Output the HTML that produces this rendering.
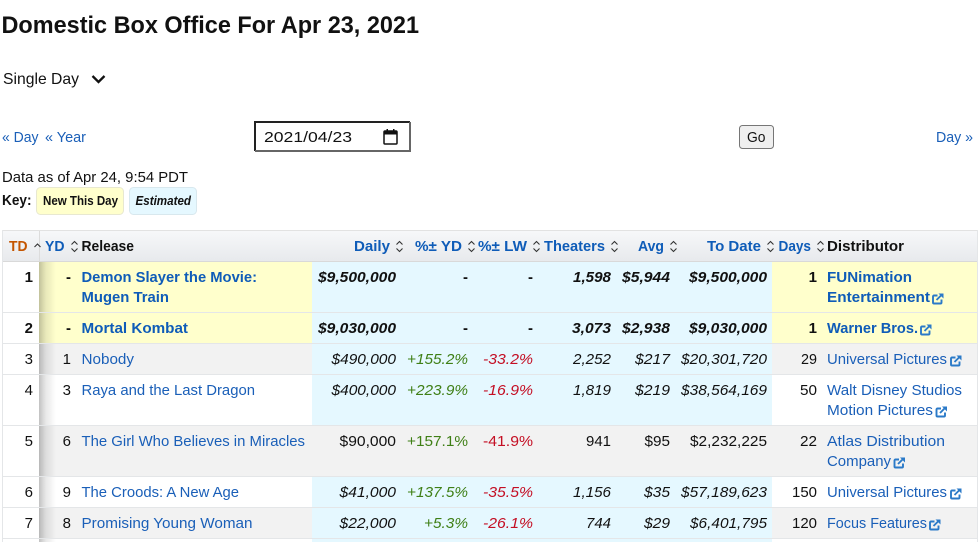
<!DOCTYPE html>
<html lang="en">
<head>
<meta charset="utf-8">
<title>Domestic Box Office For Apr 23, 2021</title>
<style>
html,body{margin:0;padding:0;background:#fff;width:979px;height:542px;overflow:hidden}
svg{display:block;font-family:"Liberation Sans",Arial,sans-serif;font-size:15px;fill:#111}
.a{fill:#1a5fb8}
.e{text-anchor:end}
.b{font-weight:bold}
.i{font-style:italic}
.bl{fill:#0f5cb8;font-weight:bold}
.g{fill:#3f7f16;font-style:italic}
.r{fill:#c40f24;font-style:italic}
.s{fill:none;stroke:#333;stroke-width:1.1}
.x{fill:none;stroke:#2b7ac8;stroke-width:1.900}
</style>
</head>
<body>
<svg width="979" height="542" viewBox="0 0 979 542" xmlns="http://www.w3.org/2000/svg">
<defs>
<linearGradient id="hd" x1="0" y1="0" x2="0" y2="1"><stop offset="0" stop-color="#f7f8fa"/><stop offset="1" stop-color="#e7e9ec"/></linearGradient>
<linearGradient id="sh" x1="0" y1="0" x2="1" y2="0"><stop offset="0" stop-color="#000" stop-opacity=".24"/><stop offset=".4" stop-color="#000" stop-opacity=".09"/><stop offset="1" stop-color="#000" stop-opacity="0"/></linearGradient>
<g id="sort"><path class="s" d="M0.500 4 L3.500 1 L6.500 4 M0.500 8 L3.500 11 L6.500 8"/></g>
<g id="ext"><path class="x" d="M5.500 2.500 H2 A1 1 0 0 0 1 3.500 V9.500 A1 1 0 0 0 2 10.500 H8.500 A1 1 0 0 0 9.500 9.500 V6.500"/><path class="x" d="M4.500 7 L9.500 2"/><path d="M6.500 0.500 H11.500 V5.500 Z" fill="#2b7ac8"/></g>
</defs>

<!-- Top -->
<text x="1.500" y="33" font-size="24" class="b" textLength="417.500" lengthAdjust="spacingAndGlyphs">Domestic Box Office For Apr 23, 2021</text>
<text x="3" y="84" font-size="16" textLength="76" lengthAdjust="spacingAndGlyphs">Single Day</text>
<path d="M92.500 76 L98.500 82 L104.500 76" fill="none" stroke="#111" stroke-width="2.300"/>

<text x="2" y="142" class="a" textLength="36.500" lengthAdjust="spacingAndGlyphs">« Day</text>
<text x="45" y="142" class="a" textLength="41" lengthAdjust="spacingAndGlyphs">« Year</text>
<text x="936" y="142" class="a" textLength="37" lengthAdjust="spacingAndGlyphs">Day »</text>

<rect x="254" y="121" width="157" height="31" fill="#fff"/>
<path d="M255 151 V122 H410" fill="none" stroke="#222" stroke-width="2"/>
<path d="M255 151 H410 V122" fill="none" stroke="#666" stroke-width="2"/>
<text x="264" y="142" textLength="88" lengthAdjust="spacingAndGlyphs">2021/04/23</text>
<rect x="384" y="131" width="13" height="13" rx="1" fill="none" stroke="#111" stroke-width="1.500"/>
<rect x="384" y="131" width="13" height="3.500" fill="#111"/>
<rect x="386.500" y="129" width="1.500" height="3" fill="#111"/>
<rect x="393" y="129" width="1.500" height="3" fill="#111"/>

<rect x="739.500" y="125.500" width="34" height="23" rx="3" fill="#efefef" stroke="#767676"/>
<text x="747" y="142" textLength="18.500" lengthAdjust="spacingAndGlyphs">Go</text>

<text x="2" y="182" textLength="186" lengthAdjust="spacingAndGlyphs">Data as of Apr 24, 9:54 PDT</text>
<text x="2" y="205" class="b" font-size="14.500" textLength="29.500" lengthAdjust="spacingAndGlyphs">Key:</text>
<rect x="36.500" y="187.500" width="87" height="27" rx="4" fill="#ffffcc" stroke="#e8e8d0"/>
<text x="43" y="205" class="b" font-size="12.500" textLength="75" lengthAdjust="spacingAndGlyphs">New This Day</text>
<rect x="129.500" y="187.500" width="67" height="27" rx="4" fill="#e5f8ff" stroke="#d8e8ee"/>
<text x="135.500" y="205" class="b i" font-size="12.500" textLength="55.500" lengthAdjust="spacingAndGlyphs">Estimated</text>

<!-- Table backgrounds -->
<rect x="2" y="230" width="976" height="32" fill="url(#hd)"/>
<rect x="2" y="230" width="976" height="1" fill="#e2e2e2"/>
<rect x="2" y="261" width="976" height="1" fill="#d9d9d9"/>
<rect x="39" y="231" width="1" height="30" fill="#dcdcdc"/>

<rect x="39" y="262" width="273" height="82" fill="#ffffcc"/>
<rect x="772" y="262" width="205" height="82" fill="#ffffcc"/>
<rect x="39" y="344" width="273" height="31" fill="#f2f2f2"/>
<rect x="772" y="344" width="205" height="31" fill="#f2f2f2"/>
<rect x="39" y="426" width="273" height="51" fill="#f2f2f2"/>
<rect x="772" y="426" width="205" height="51" fill="#f2f2f2"/>
<rect x="39" y="508" width="273" height="31" fill="#f2f2f2"/>
<rect x="772" y="508" width="205" height="31" fill="#f2f2f2"/>
<rect x="312" y="262" width="460" height="280" fill="#e5f8ff"/>
<rect x="312" y="426" width="460" height="51" fill="#f2f2f2"/>
<rect x="39" y="262" width="17" height="280" fill="url(#sh)"/>

<g fill="#e4e6e8">
<rect x="2" y="312" width="976" height="1"/>
<rect x="2" y="343" width="976" height="1"/>
<rect x="2" y="374" width="976" height="1"/>
<rect x="2" y="425" width="976" height="1"/>
<rect x="2" y="476" width="976" height="1"/>
<rect x="2" y="507" width="976" height="1"/>
<rect x="2" y="538" width="976" height="1"/>
<rect x="2" y="230" width="1" height="312"/>
<rect x="977" y="230" width="1" height="312"/>
</g>

<!-- Header -->
<text x="9" y="251" class="b" style="fill:#c45500" textLength="18.500" lengthAdjust="spacingAndGlyphs">TD</text>
<path class="s" d="M34.500 247 L37.500 244 L40.500 247"/>
<text x="45" y="251" class="bl" textLength="19.500" lengthAdjust="spacingAndGlyphs">YD</text>
<use href="#sort" x="71" y="240.500"/>
<text x="81.500" y="251" class="b" textLength="52.500" lengthAdjust="spacingAndGlyphs">Release</text>
<text x="354" y="251" class="bl" textLength="36" lengthAdjust="spacingAndGlyphs">Daily</text>
<use href="#sort" x="396" y="240.500"/>
<text x="415" y="251" class="bl" textLength="47" lengthAdjust="spacingAndGlyphs">%± YD</text>
<use href="#sort" x="468" y="240.500"/>
<text x="478" y="251" class="bl" textLength="49" lengthAdjust="spacingAndGlyphs">%± LW</text>
<use href="#sort" x="533" y="240.500"/>
<text x="544" y="251" class="bl" textLength="61" lengthAdjust="spacingAndGlyphs">Theaters</text>
<use href="#sort" x="611" y="240.500"/>
<text x="638" y="251" class="bl" textLength="26" lengthAdjust="spacingAndGlyphs">Avg</text>
<use href="#sort" x="670" y="240.500"/>
<text x="707" y="251" class="bl" textLength="54" lengthAdjust="spacingAndGlyphs">To Date</text>
<use href="#sort" x="767" y="240.500"/>
<text x="778.500" y="251" class="bl" font-size="14.500" textLength="32.500" lengthAdjust="spacingAndGlyphs">Days</text>
<use href="#sort" x="817" y="240.500"/>
<text x="827" y="251" class="b" textLength="77" lengthAdjust="spacingAndGlyphs">Distributor</text>

<!-- Row 1 -->
<text x="33" y="282" class="e b">1</text>
<text x="71" y="282" class="e b">-</text>
<text x="81.500" y="282" class="bl" textLength="175.500" lengthAdjust="spacingAndGlyphs">Demon Slayer the Movie:</text>
<text x="81.500" y="302" class="bl" textLength="87.500" lengthAdjust="spacingAndGlyphs">Mugen Train</text>
<text x="318" y="282" class="b i" textLength="78" lengthAdjust="spacingAndGlyphs">$9,500,000</text>
<text x="468" y="282" class="e b">-</text>
<text x="533" y="282" class="e b">-</text>
<text x="573" y="282" class="b i" textLength="38" lengthAdjust="spacingAndGlyphs">1,598</text>
<text x="622" y="282" class="b i" textLength="48" lengthAdjust="spacingAndGlyphs">$5,944</text>
<text x="689" y="282" class="b i" textLength="78" lengthAdjust="spacingAndGlyphs">$9,500,000</text>
<text x="817" y="282" class="e b">1</text>
<text x="827" y="282" class="bl" textLength="85" lengthAdjust="spacingAndGlyphs">FUNimation</text>
<text x="827" y="302" class="bl" textLength="103" lengthAdjust="spacingAndGlyphs">Entertainment</text>
<use href="#ext" x="932" y="293"/>

<!-- Row 2 -->
<text x="33" y="333" class="e b">2</text>
<text x="71" y="333" class="e b">-</text>
<text x="81.500" y="333" class="bl" textLength="106.500" lengthAdjust="spacingAndGlyphs">Mortal Kombat</text>
<text x="318" y="333" class="b i" textLength="78" lengthAdjust="spacingAndGlyphs">$9,030,000</text>
<text x="468" y="333" class="e b">-</text>
<text x="533" y="333" class="e b">-</text>
<text x="572" y="333" class="b i" textLength="39" lengthAdjust="spacingAndGlyphs">3,073</text>
<text x="622" y="333" class="b i" textLength="48" lengthAdjust="spacingAndGlyphs">$2,938</text>
<text x="689" y="333" class="b i" textLength="78" lengthAdjust="spacingAndGlyphs">$9,030,000</text>
<text x="817" y="333" class="e b">1</text>
<text x="827" y="333" class="bl" textLength="91" lengthAdjust="spacingAndGlyphs">Warner Bros.</text>
<use href="#ext" x="920" y="324"/>

<!-- Row 3 -->
<text x="33" y="364" class="e">3</text>
<text x="71" y="364" class="e">1</text>
<text x="81.500" y="364" class="a" textLength="52.500" lengthAdjust="spacingAndGlyphs">Nobody</text>
<text x="331.500" y="364" class="i" textLength="64.500" lengthAdjust="spacingAndGlyphs">$490,000</text>
<text x="407" y="364" class="g" textLength="61" lengthAdjust="spacingAndGlyphs">+155.2%</text>
<text x="483" y="364" class="r" textLength="50" lengthAdjust="spacingAndGlyphs">-33.2%</text>
<text x="573" y="364" class="i" textLength="38" lengthAdjust="spacingAndGlyphs">2,252</text>
<text x="635" y="364" class="i" textLength="35" lengthAdjust="spacingAndGlyphs">$217</text>
<text x="681" y="364" class="i" textLength="86" lengthAdjust="spacingAndGlyphs">$20,301,720</text>
<text x="801" y="364" textLength="16" lengthAdjust="spacingAndGlyphs">29</text>
<text x="827" y="364" class="a" textLength="120" lengthAdjust="spacingAndGlyphs">Universal Pictures</text>
<use href="#ext" x="950" y="355"/>

<!-- Row 4 -->
<text x="33" y="395" class="e">4</text>
<text x="71" y="395" class="e">3</text>
<text x="81.500" y="395" class="a" textLength="173.500" lengthAdjust="spacingAndGlyphs">Raya and the Last Dragon</text>
<text x="331.500" y="395" class="i" textLength="64.500" lengthAdjust="spacingAndGlyphs">$400,000</text>
<text x="407" y="395" class="g" textLength="61" lengthAdjust="spacingAndGlyphs">+223.9%</text>
<text x="483" y="395" class="r" textLength="50" lengthAdjust="spacingAndGlyphs">-16.9%</text>
<text x="573" y="395" class="i" textLength="38" lengthAdjust="spacingAndGlyphs">1,819</text>
<text x="635" y="395" class="i" textLength="35" lengthAdjust="spacingAndGlyphs">$219</text>
<text x="681" y="395" class="i" textLength="86" lengthAdjust="spacingAndGlyphs">$38,564,169</text>
<text x="800" y="395" textLength="17" lengthAdjust="spacingAndGlyphs">50</text>
<text x="827" y="395" class="a" textLength="135" lengthAdjust="spacingAndGlyphs">Walt Disney Studios</text>
<text x="827" y="415" class="a" textLength="106" lengthAdjust="spacingAndGlyphs">Motion Pictures</text>
<use href="#ext" x="935.500" y="406"/>

<!-- Row 5 -->
<text x="33" y="446" class="e">5</text>
<text x="71" y="446" class="e">6</text>
<text x="81.500" y="446" class="a" textLength="223.500" lengthAdjust="spacingAndGlyphs">The Girl Who Believes in Miracles</text>
<text x="339.500" y="446" textLength="56.500" lengthAdjust="spacingAndGlyphs">$90,000</text>
<text x="407" y="446" style="fill:#3f7f16" textLength="61" lengthAdjust="spacingAndGlyphs">+157.1%</text>
<text x="483" y="446" style="fill:#c40f24" textLength="50" lengthAdjust="spacingAndGlyphs">-41.9%</text>
<text x="586" y="446" textLength="25" lengthAdjust="spacingAndGlyphs">941</text>
<text x="644.500" y="446" textLength="25.500" lengthAdjust="spacingAndGlyphs">$95</text>
<text x="690" y="446" textLength="77" lengthAdjust="spacingAndGlyphs">$2,232,225</text>
<text x="800" y="446" textLength="17" lengthAdjust="spacingAndGlyphs">22</text>
<text x="827" y="446" class="a" textLength="118" lengthAdjust="spacingAndGlyphs">Atlas Distribution</text>
<text x="827" y="466" class="a" textLength="64" lengthAdjust="spacingAndGlyphs">Company</text>
<use href="#ext" x="893.500" y="457"/>

<!-- Row 6 -->
<text x="33" y="497" class="e">6</text>
<text x="71" y="497" class="e">9</text>
<text x="81.500" y="497" class="a" textLength="157.500" lengthAdjust="spacingAndGlyphs">The Croods: A New Age</text>
<text x="339.500" y="497" class="i" textLength="56.500" lengthAdjust="spacingAndGlyphs">$41,000</text>
<text x="407" y="497" class="g" textLength="61" lengthAdjust="spacingAndGlyphs">+137.5%</text>
<text x="483" y="497" class="r" textLength="50" lengthAdjust="spacingAndGlyphs">-35.5%</text>
<text x="573" y="497" class="i" textLength="38" lengthAdjust="spacingAndGlyphs">1,156</text>
<text x="644" y="497" class="i" textLength="26" lengthAdjust="spacingAndGlyphs">$35</text>
<text x="681" y="497" class="i" textLength="86" lengthAdjust="spacingAndGlyphs">$57,189,623</text>
<text x="792" y="497" textLength="25" lengthAdjust="spacingAndGlyphs">150</text>
<text x="827" y="497" class="a" textLength="120" lengthAdjust="spacingAndGlyphs">Universal Pictures</text>
<use href="#ext" x="950" y="488"/>

<!-- Row 7 -->
<text x="33" y="528" class="e">7</text>
<text x="71" y="528" class="e">8</text>
<text x="81.500" y="528" class="a" textLength="171" lengthAdjust="spacingAndGlyphs">Promising Young Woman</text>
<text x="339.500" y="528" class="i" textLength="56.500" lengthAdjust="spacingAndGlyphs">$22,000</text>
<text x="424" y="528" class="g" textLength="44" lengthAdjust="spacingAndGlyphs">+5.3%</text>
<text x="483" y="528" class="r" textLength="50" lengthAdjust="spacingAndGlyphs">-26.1%</text>
<text x="586" y="528" class="i" textLength="25" lengthAdjust="spacingAndGlyphs">744</text>
<text x="644" y="528" class="i" textLength="26" lengthAdjust="spacingAndGlyphs">$29</text>
<text x="690" y="528" class="i" textLength="77" lengthAdjust="spacingAndGlyphs">$6,401,795</text>
<text x="792" y="528" textLength="25" lengthAdjust="spacingAndGlyphs">120</text>
<text x="827" y="528" class="a" textLength="100" lengthAdjust="spacingAndGlyphs">Focus Features</text>
<use href="#ext" x="929" y="519"/>
</svg>
</body>
</html>
